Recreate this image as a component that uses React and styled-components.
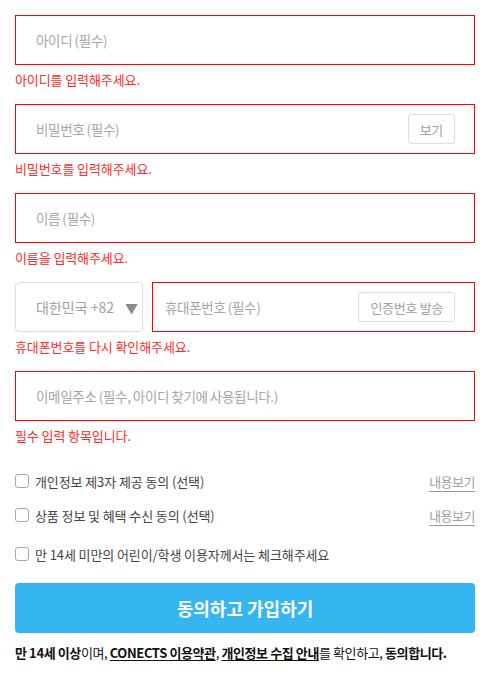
import styled, { createGlobalStyle } from "styled-components";

// global
const GlobalStyle = createGlobalStyle`
  * { box-sizing: border-box; }
  body {
    margin: 0;
    background: #fff;
    font-family: "Noto Sans CJK KR", "Noto Sans", sans-serif;
  }
`;

// data
const agreements = [
  { id: 1, label: "개인정보 제3자 제공 동의 (선택)", more: true },
  { id: 2, label: "상품 정보 및 혜택 수신 동의 (선택)", more: true },
  { id: 3, label: "만 14세 미만의 어린이/학생 이용자께서는 체크해주세요", more: false },
];

// main
function App() {
  return (
    <>
      <GlobalStyle />
      <Form>
        <Field>
          <Box $error>
            <Input placeholder="아이디 (필수)" />
          </Box>
          <Error>아이디를 입력해주세요.</Error>
        </Field>

        <Field>
          <Box $error>
            <Input type="password" placeholder="비밀번호 (필수)" />
            <SmallButton type="button">보기</SmallButton>
          </Box>
          <Error>비밀번호를 입력해주세요.</Error>
        </Field>

        <Field>
          <Box $error>
            <Input placeholder="이름 (필수)" />
          </Box>
          <Error>이름을 입력해주세요.</Error>
        </Field>

        <Field>
          <PhoneRow>
            <Select>
              <span>대한민국 +82</span>
              <Arrow>▼</Arrow>
            </Select>
            <Box $error $inset="12px">
              <Input placeholder="휴대폰번호 (필수)" />
              <SmallButton type="button">인증번호 발송</SmallButton>
            </Box>
          </PhoneRow>
          <Error>휴대폰번호를 다시 확인해주세요.</Error>
        </Field>

        <Field>
          <Box $error>
            <Input placeholder="이메일주소 (필수, 아이디 찾기에 사용됩니다.)" />
          </Box>
          <Error>필수 입력 항목입니다.</Error>
        </Field>

        <Agreements>
          {agreements.map((item) => (
            <AgreeRow key={item.id} $spaced={!item.more}>
              <AgreeLabel>
                <Check />
                {item.label}
              </AgreeLabel>
              {item.more && <MoreLink>내용보기</MoreLink>}
            </AgreeRow>
          ))}
        </Agreements>

        <Submit type="button">동의하고 가입하기</Submit>

        <Notice>
          <b>만 14세 이상</b>이며, <u>CONECTS 이용약관</u>, <u>개인정보 수집 안내</u>를
          확인하고, <b>동의합니다.</b>
        </Notice>
      </Form>
    </>
  );
}

export default App;

// style
const Form = styled.div`
  padding: 15px 13px 0 15px;
  width: 488px;
`;

const Field = styled.div`
  margin-bottom: 14px;
`;

const Box = styled.div`
  display: flex;
  align-items: center;
  height: 50px;
  padding: 0 19px 0 ${(p) => p.$inset || "20px"};
  border: 1px solid ${(p) => (p.$error ? "#ff0000" : "#dddddd")};
  background: #fff;
  min-width: 0;
`;

const Input = styled.input`
  flex: 1;
  min-width: 0;
  border: 0;
  outline: none;
  padding: 0;
  background: transparent;
  font-family: inherit;
  font-size: 13.5px;
  letter-spacing: -0.3px;
  word-spacing: -0.6px;
  color: #333;

  &::placeholder {
    color: #a6a6a6;
  }
`;

const SmallButton = styled.button`
  flex-shrink: 0;
  height: 30px;
  padding: 0 11px;
  border: 1px solid #dddddd;
  border-radius: 3px;
  background: #fff;
  color: #a0a0a0;
  font-family: inherit;
  font-size: 13px;
  letter-spacing: -0.3px;
`;

const Error = styled.p`
  margin: 5px 0 0;
  height: 20px;
  line-height: 20px;
  font-size: 13px;
  letter-spacing: -0.1px;
  color: #ff2b2b;
`;

const PhoneRow = styled.div`
  display: grid;
  grid-template-columns: 128px 1fr;
  gap: 9px;
`;

const Select = styled.div`
  display: flex;
  align-items: center;
  justify-content: space-between;
  height: 50px;
  padding: 0 4px 0 20px;
  border: 1px solid #dddddd;
  border-radius: 4px;
  color: #a0a0a0;
  font-size: 14px;
`;

const Arrow = styled.span`
  font-size: 13px;
  color: #8c8c8c;
`;

const Agreements = styled.div`
  margin-top: 25px;
  display: flex;
  flex-direction: column;
  gap: 14px;
`;

const AgreeRow = styled.div`
  display: flex;
  align-items: center;
  justify-content: space-between;
  height: 20px;
  margin-top: ${(p) => (p.$spaced ? "5px" : "0")};
`;

const AgreeLabel = styled.label`
  display: flex;
  align-items: center;
  gap: 6px;
  font-size: 13px;
  letter-spacing: -0.1px;
  color: #444;
`;

const Check = styled.span`
  display: inline-block;
  width: 14px;
  height: 14px;
  border: 1px solid #a8a8a8;
  border-radius: 3px;
  background: #fff;
`;

const MoreLink = styled.span`
  font-size: 13px;
  letter-spacing: -0.5px;
  color: #a0a0a0;
  text-decoration: underline;
  text-decoration-color: #999;
  text-underline-offset: 4px;
`;

const Submit = styled.button`
  display: block;
  width: 100%;
  height: 50px;
  margin-top: 19px;
  border: 0;
  border-radius: 4px;
  background: #35b6f1;
  color: #fff;
  font-family: inherit;
  font-size: 18px;
  font-weight: 700;
`;

const Notice = styled.p`
  margin: 10px 0 0;
  line-height: 20px;
  font-size: 13px;
  letter-spacing: -0.4px;
  color: #111;

  b {
    font-weight: 700;
  }

  u {
    font-weight: 700;
    text-underline-offset: 2px;
  }
`;
